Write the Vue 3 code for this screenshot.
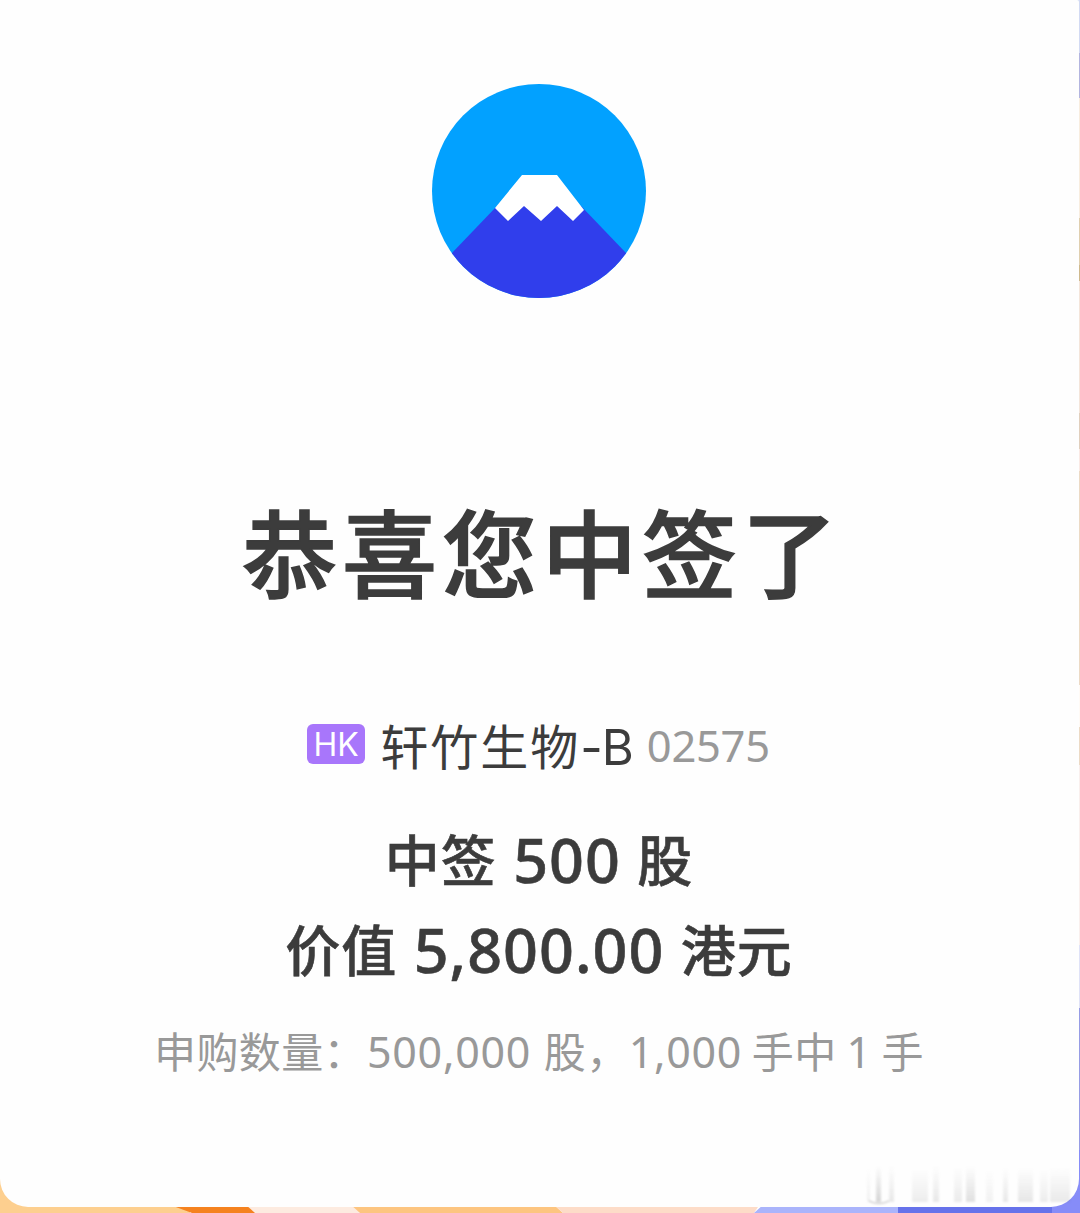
<template>
  <div class="page">
    <!-- 彩色背景 -->
    <svg class="backdrop" width="1080" height="1213" viewBox="0 0 1080 1213">
      <rect width="1080" height="1213" fill="#fff" />
      <rect
        v-for="item in edges"
        :key="item.y"
        x="1070"
        :y="item.y"
        width="10"
        :height="item.h"
        :fill="item.color"
      />
      <path d="M0 1170H190V1213H0Z" fill="#fdcf8f" />
      <path d="M165 1203L247 1203L258 1213H192Z" fill="#f5821f" />
      <path d="M245 1204H354L360 1213H255Z" fill="#fdebe0" />
      <path d="M350 1204H553L563 1213H360Z" fill="#fdc580" />
      <path d="M553 1204H760L754 1213H563Z" fill="#fddcc8" />
      <path d="M764 1204H900V1213H754Z" fill="#aab4fb" />
      <path d="M898 1204H1056V1213H898Z" fill="#6672ea" />
      <path d="M1052 1213V1150H1080V1213Z" fill="#868cf8" />
    </svg>

    <div class="card">
      <svg class="logo" viewBox="0 0 214 214">
        <defs>
          <clipPath id="round"><circle cx="107" cy="107" r="107" /></clipPath>
        </defs>
        <g clip-path="url(#round)">
          <rect width="214" height="214" fill="#02a1ff" />
          <path d="M19 170L65 122L149 122L195 170V214H19Z" fill="#303eec" />
          <path
            d="M90 91H125L152 126L141 137L125 122L109 137L92 122L76 137L63 124Z"
            fill="#fff"
          />
        </g>
      </svg>

      <h1>恭喜您中签了</h1>

      <div class="stock">
        <span class="market">HK</span>
        <span class="name">轩竹生物<em>-B</em></span>
        <span class="code">{{ code }}</span>
      </div>

      <div class="result">中签 <b>500</b> 股</div>
      <div class="result">价值 <b>5,800.00</b> 港元</div>

      <div class="detail">
        申购数量：<i class="total">500,000</i> 股，<i>1,000</i> 手中 <i>1</i> 手
      </div>
    </div>

    <!-- 右下角淡色条纹 -->
    <svg class="streaks" width="216" height="44" viewBox="0 0 216 44">
      <defs>
        <linearGradient id="fade" x1="0" y1="0" x2="0" y2="1">
          <stop offset="0" stop-color="#777" stop-opacity="0" />
          <stop offset="1" stop-color="#777" />
        </linearGradient>
      </defs>
      <rect
        v-for="item in streaks"
        :key="item.x"
        :x="item.x"
        :y="item.y"
        :width="item.w"
        :height="36 - item.y"
        :opacity="item.o"
        fill="url(#fade)"
      />
      <path d="M5 35Q15 40 25 35" fill="none" stroke="#bbb" stroke-width="1" />
    </svg>
  </div>
</template>

<script setup>
import { ref } from 'vue';

// 股票代码
const code = ref('02575');

// 右侧边缘的背景色块
const edges = [
  { y: 0, h: 53, color: '#d2daf3' },
  { y: 53, h: 45, color: '#b3b5df' },
  { y: 98, h: 120, color: '#f8eddf' },
  { y: 218, h: 47, color: '#e0cfaf' },
  { y: 265, h: 16, color: '#cfb98d' },
  { y: 281, h: 132, color: '#f4e5da' },
  { y: 413, h: 36, color: '#e1cfbd' },
  { y: 449, h: 22, color: '#fae9e4' },
  { y: 471, h: 214, color: '#ecdac5' },
  { y: 685, h: 42, color: '#fffaf5' },
  { y: 727, h: 38, color: '#ecdac5' },
  { y: 765, h: 180, color: '#f9efed' },
  { y: 945, h: 63, color: '#dfe2f7' },
  { y: 1008, h: 150, color: '#969ce5' },
];

// 条纹的位置与深浅
const streaks = [
  { x: 3, y: 2, w: 3, o: 0.1 },
  { x: 12, y: 0, w: 5, o: 0.3 },
  { x: 25, y: 0, w: 5, o: 0.16 },
  { x: 48, y: 4, w: 16, o: 0.13 },
  { x: 69, y: 0, w: 6, o: 0.16 },
  { x: 90, y: 2, w: 8, o: 0.14 },
  { x: 102, y: 0, w: 9, o: 0.22 },
  { x: 122, y: 4, w: 7, o: 0.09 },
  { x: 139, y: 2, w: 5, o: 0.16 },
  { x: 154, y: 2, w: 15, o: 0.17 },
  { x: 176, y: 4, w: 8, o: 0.13 },
  { x: 186, y: 2, w: 20, o: 0.15 },
];
</script>

<style>
body {
  margin: 0;
}
</style>

<style scoped>
.page {
  position: relative;
  width: 1080px;
  height: 1213px;
  overflow: hidden;
  font-family: 'Noto Sans CJK SC', sans-serif;
  color: #3c3c3c;
}

.backdrop {
  position: absolute;
  left: 0;
  top: 0;
}

.card {
  position: relative;
  box-sizing: border-box;
  width: 1079px;
  height: 1207px;
  padding: 84px 1px 0 0;
  display: flex;
  flex-direction: column;
  align-items: center;
  background: #fefefe;
  border-radius: 0 2px 28px 28px;
}

.logo {
  width: 214px;
  height: 214px;
}

h1 {
  margin: 178px 0 0;
  padding-left: 6px;
  height: 148px;
  line-height: 148px;
  font-size: 95px;
  font-weight: 500;
  letter-spacing: 5px;
  -webkit-text-stroke: 1.6px #3c3c3c;
}

.stock {
  display: flex;
  align-items: center;
  height: 70px;
  margin-top: 85px;
  padding-right: 1px;
  white-space: nowrap;
}

.market {
  width: 58px;
  height: 40px;
  line-height: 41px;
  border-radius: 6px;
  background: #a876fb;
  color: #fff;
  font-family: Inter, sans-serif;
  font-size: 32px;
  font-weight: 400;
  text-align: center;
}

.name {
  margin-left: 15px;
  font-size: 48px;
  letter-spacing: 2px;
}

.name em {
  font-family: Inter, sans-serif;
  font-size: 49px;
  font-style: normal;
  letter-spacing: -1px;
}

.code {
  margin: 2px 0 0 14px;
  font-family: 'Noto Sans', sans-serif;
  font-size: 43.5px;
  letter-spacing: -0.3px;
  color: #999;
}

.result {
  height: 90px;
  line-height: 90px;
  font-size: 55px;
  font-weight: 500;
  letter-spacing: 1px;
  -webkit-text-stroke: 0.6px #3c3c3c;
  white-space: nowrap;
}

.stock + .result {
  margin-top: 33px;
}

.result b {
  margin: 0 3px;
  font-family: 'Noto Sans', sans-serif;
  font-size: 61px;
  line-height: 1;
  font-weight: 500;
  letter-spacing: 1px;
  vertical-align: -2px;
}

.detail {
  height: 70px;
  line-height: 70px;
  margin-top: 23px;
  font-size: 42px;
  letter-spacing: 0.4px;
  color: #999;
  white-space: nowrap;
}

.detail i {
  font-family: 'Noto Sans', sans-serif;
  font-size: 43px;
  line-height: 1;
  font-style: normal;
  letter-spacing: 0.7px;
}

.detail .total {
  margin: 0 3px 0 1px;
}

.streaks {
  position: absolute;
  left: 864px;
  top: 1166px;
  filter: blur(1px);
}
</style>
